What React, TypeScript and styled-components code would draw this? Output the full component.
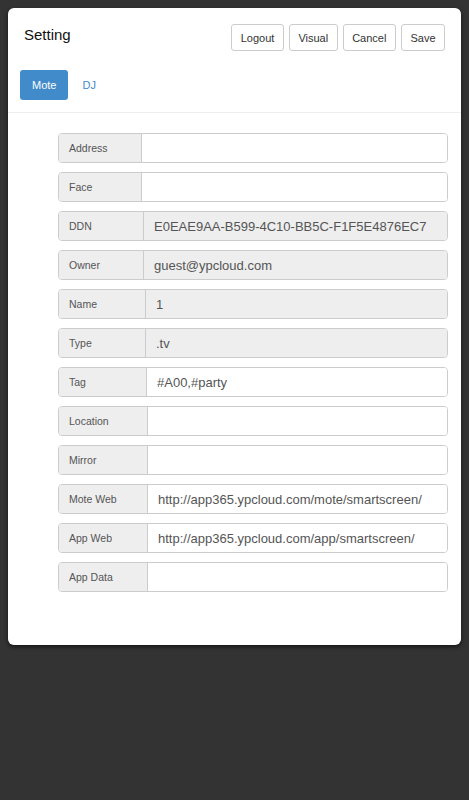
import styled, { createGlobalStyle } from "styled-components";

const GlobalStyle = createGlobalStyle`
  html, body {
    margin: 0;
    padding: 0;
    background: #333333;
    font-family: "Liberation Sans", Arial, Helvetica, sans-serif;
  }
  * {
    box-sizing: border-box;
  }
`;

const Page = styled.div`
  min-height: 800px;
  padding: 8px;
  background: #333333;
`;

const Modal = styled.div`
  width: 453px;
  background: #ffffff;
  border-radius: 6px;
  box-shadow: 0 2px 4px rgba(0, 0, 0, 0.6);
`;

const Header = styled.div`
  display: flex;
  justify-content: space-between;
  align-items: flex-start;
  padding: 16px 16px 0 16px;
`;

const Title = styled.h4`
  margin: 0;
  padding-top: 1px;
  font-size: 15px;
  line-height: 20px;
  font-weight: normal;
  color: #111;
`;

const Actions = styled.div`
  display: flex;
  gap: 5px;
`;

const Button = styled.button`
  height: 27px;
  padding: 0 8.5px;
  border: 1px solid #cccccc;
  border-radius: 3px;
  background: #ffffff;
  color: #333;
  font-family: inherit;
  font-size: 11px;
  cursor: pointer;
`;

const Tabs = styled.div`
  display: flex;
  gap: 2px;
  padding: 19px 12px 12px 12px;
  border-bottom: 1px solid #eeeeee;
`;

const Tab = styled.a<{ $active?: boolean }>`
  display: flex;
  align-items: center;
  height: 30px;
  padding: 0 12px;
  border-radius: 3px;
  font-size: 11px;
  text-decoration: none;
  background: ${(p) => (p.$active ? "#428bca" : "transparent")};
  color: ${(p) => (p.$active ? "#ffffff" : "#428bca")};
`;

const Body = styled.div`
  display: flex;
  flex-direction: column;
  gap: 9px;
  padding: 20px 13px 53px 50px;
`;

const Row = styled.div`
  display: flex;
  height: 30px;
  border: 1px solid #cccccc;
  border-radius: 4px;
  overflow: hidden;
`;

const Addon = styled.label<{ $width: number }>`
  display: flex;
  align-items: center;
  flex: 0 0 ${(p) => p.$width}px;
  padding-left: 10px;
  background: #eeeeee;
  border-right: 1px solid #cccccc;
  color: #555;
  font-size: 10.5px;
`;

const Field = styled.input`
  flex: 1;
  min-width: 0;
  border: none;
  outline: none;
  padding: 0 10px;
  font-family: inherit;
  font-size: 13px;
  color: #555;
  background: ${(p) => (p.readOnly ? "#eeeeee" : "#ffffff")};
`;

type FieldDef = { label: string; value: string; width: number; readOnly?: boolean };

const fields: FieldDef[] = [
  { label: "Address", value: "", width: 83 },
  { label: "Face", value: "", width: 83 },
  { label: "DDN", value: "E0EAE9AA-B599-4C10-BB5C-F1F5E4876EC7", width: 85, readOnly: true },
  { label: "Owner", value: "guest@ypcloud.com", width: 85, readOnly: true },
  { label: "Name", value: "1", width: 87, readOnly: true },
  { label: "Type", value: ".tv", width: 87, readOnly: true },
  { label: "Tag", value: "#A00,#party", width: 88 },
  { label: "Location", value: "", width: 89 },
  { label: "Mirror", value: "", width: 89 },
  { label: "Mote Web", value: "http://app365.ypcloud.com/mote/smartscreen/", width: 89 },
  { label: "App Web", value: "http://app365.ypcloud.com/app/smartscreen/", width: 89 },
  { label: "App Data", value: "", width: 89 },
];

export default function App() {
  return (
    <>
      <GlobalStyle />
      <Page>
        <Modal>
          <Header>
            <Title>Setting</Title>
            <Actions>
              <Button>Logout</Button>
              <Button>Visual</Button>
              <Button>Cancel</Button>
              <Button>Save</Button>
            </Actions>
          </Header>
          <Tabs>
            <Tab $active>Mote</Tab>
            <Tab>DJ</Tab>
          </Tabs>
          <Body>
            {fields.map((f) => (
              <Row key={f.label}>
                <Addon $width={f.width}>{f.label}</Addon>
                <Field defaultValue={f.value} readOnly={f.readOnly} />
              </Row>
            ))}
          </Body>
        </Modal>
      </Page>
    </>
  );
}
